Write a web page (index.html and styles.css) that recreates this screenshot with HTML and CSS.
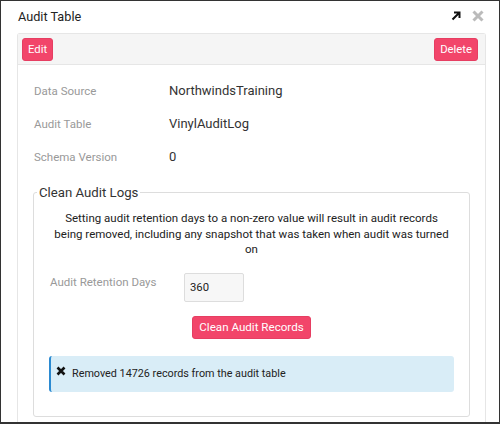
FILE: index.html
```html
<!DOCTYPE html>
<html>
<head>
<meta charset="utf-8">
<link rel="stylesheet" href="styles.css">
</head>
<body>
<div class="modal">
  <div class="modal-header">
    <div class="modal-title">Audit Table</div>
    <div class="header-icons">
      <svg class="icon-expand" width="10" height="10" viewBox="0 0 10 10"><path d="M1.5 8.5 L8 2 M3 1.5 H8.5 V7" fill="none" stroke="#111" stroke-width="2"/></svg>
      <svg class="icon-close" width="12" height="12" viewBox="0 0 12 12"><path d="M1.5 1.5 L10.5 10.5 M10.5 1.5 L1.5 10.5" fill="none" stroke="#bbb" stroke-width="3"/></svg>
    </div>
  </div>
  <div class="panel">
    <div class="panel-heading">
      <button class="btn">Edit</button>
      <button class="btn">Delete</button>
    </div>
    <div class="panel-body">
      <div class="row"><span class="label">Data Source</span><span class="value">NorthwindsTraining</span></div>
      <div class="row"><span class="label">Audit Table</span><span class="value">VinylAuditLog</span></div>
      <div class="row"><span class="label">Schema Version</span><span class="value">0</span></div>
      <fieldset class="clean">
        <legend>Clean Audit Logs</legend>
        <p class="note">Setting audit retention days to a non-zero value will result in audit records being removed, including any snapshot that was taken when audit was turned on</p>
        <div class="retention">
          <span class="label2">Audit Retention Days</span>
          <div class="input">360</div>
        </div>
        <div class="center"><button class="btn btn-wide">Clean Audit Records</button></div>
        <div class="alert">
          <svg class="alert-x" width="10" height="10" viewBox="0 0 10 10"><path d="M1.5 1.5 L8.5 8.5 M8.5 1.5 L1.5 8.5" fill="none" stroke="#111" stroke-width="2.6"/></svg>
          <span>Removed 14726 records from the audit table</span>
        </div>
      </fieldset>
    </div>
  </div>
</div>
</body>
</html>
```

FILE: styles.css
```css
html, body {
  margin: 0;
  padding: 0;
  background: #fff;
}
body {
  font-family: Roboto, "Liberation Sans", sans-serif;
  font-size: 13px;
  color: #333;
}
.modal {
  width: 500px;
  height: 424px;
  box-sizing: border-box;
  border: 1px solid #333;
  border-bottom-width: 2px;
  overflow: hidden;
}
.modal-header {
  height: 32px;
  box-sizing: border-box;
  padding: 0 15px 2px 17px;
  display: flex;
  align-items: center;
  justify-content: space-between;
}
.modal-title {
  font-size: 12.7px;
  color: #222;
}
.header-icons {
  display: flex;
  align-items: center;
  gap: 11px;
}
.panel {
  margin: 0 13px 0 16px;
  border: 1px solid #e6e6e6;
  border-bottom: none;
  border-radius: 3px 3px 0 0;
  height: 400px;
}
.panel-heading {
  background: #f5f5f5;
  border-bottom: 1px solid #e6e6e6;
  padding: 4px 7px 3px 4px;
  display: flex;
  justify-content: space-between;
}
.btn {
  font-family: Roboto, "Liberation Sans", sans-serif;
  font-size: 11.3px;
  color: #fff;
  background: #f2456a;
  border: 1px solid #e63e62;
  border-radius: 3px;
  box-sizing: border-box;
  height: 23px;
  padding: 0 5px;
  line-height: 21px;
}
.btn-wide {
  font-size: 11.6px;
  padding: 0 6px;
}
.panel-body {
  padding: 9px 15px 0 15px;
}
.row {
  display: flex;
  height: 33px;
  align-items: center;
  padding-left: 1px;
}
.label {
  width: 135px;
  font-size: 11.5px;
  color: #999;
}
.value {
  color: #333;
}
.clean {
  margin: 12px 0 0 0;
  border: 1px solid #ddd;
  border-radius: 3px;
  padding: 0 15px 24px 15px;
}
.clean legend {
  font-size: 13.2px;
  color: #333;
  padding: 0 2px;
  margin-left: -12px;
}
.note {
  text-align: center;
  font-size: 11.5px;
  margin: 11px 0 0 0;
  padding: 0 4px;
  line-height: 15.5px;
  color: #222;
}
.retention {
  display: flex;
  align-items: flex-start;
  margin-top: 15px;
}
.label2 {
  width: 134px;
  padding-left: 1px;
  font-size: 11.5px;
  color: #999;
  margin-top: 2px;
}
.input {
  height: 27px;
  border: 1px solid #ddd;
  border-radius: 2px;
  background: #f7f7f7;
  line-height: 28px;
  padding-left: 5px;
  width: 53px;
  font-size: 11.3px;
  color: #222;
}
.center {
  text-align: center;
  margin-top: 14px;
  height: 23px;
}
.alert {
  margin-top: 17px;
  background: #d9edf7;
  border-left: 2px solid #2b8ad1;
  border-radius: 3px;
  height: 36px;
  display: flex;
  align-items: center;
  padding-left: 5px;
  font-size: 10.8px;
  color: #222;
}
.alert-x {
  margin-right: 6px;
  margin-top: -6px;
}
```
